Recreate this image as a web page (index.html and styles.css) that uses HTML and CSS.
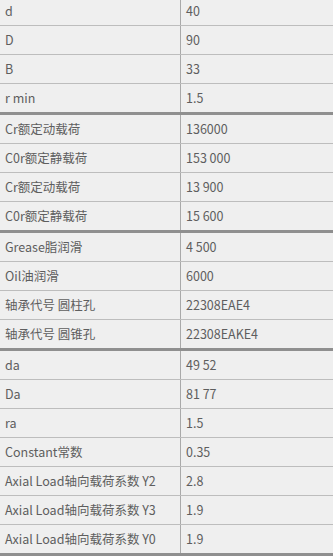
FILE: index.html
```html
<!DOCTYPE html>
<html lang="zh">
<head>
<meta charset="utf-8">
<link rel="stylesheet" href="styles.css">
</head>
<body class="page">
<table class="spec">
  <tbody class="group">
    <tr><td class="k">d</td><td class="v">40</td></tr>
    <tr><td class="k">D</td><td class="v">90</td></tr>
    <tr><td class="k">B</td><td class="v">33</td></tr>
    <tr><td class="k">r min</td><td class="v">1.5</td></tr>
  </tbody>
  <tbody class="group">
    <tr><td class="k">Cr额定动载荷</td><td class="v">136000</td></tr>
    <tr><td class="k">C0r额定静载荷</td><td class="v">153 000</td></tr>
    <tr><td class="k">Cr额定动载荷</td><td class="v">13 900</td></tr>
    <tr><td class="k">C0r额定静载荷</td><td class="v">15 600</td></tr>
  </tbody>
  <tbody class="group">
    <tr><td class="k">Grease脂润滑</td><td class="v">4 500</td></tr>
    <tr><td class="k">Oil油润滑</td><td class="v">6000</td></tr>
    <tr><td class="k">轴承代号 圆柱孔</td><td class="v">22308EAE4</td></tr>
    <tr><td class="k">轴承代号 圆锥孔</td><td class="v">22308EAKE4</td></tr>
  </tbody>
  <tbody class="group">
    <tr><td class="k">da</td><td class="v">49 52</td></tr>
    <tr><td class="k">Da</td><td class="v">81 77</td></tr>
    <tr><td class="k">ra</td><td class="v">1.5</td></tr>
    <tr><td class="k">Constant常数</td><td class="v">0.35</td></tr>
    <tr><td class="k">Axial Load轴向载荷系数 Y2</td><td class="v">2.8</td></tr>
    <tr><td class="k">Axial Load轴向载荷系数 Y3</td><td class="v">1.9</td></tr>
    <tr><td class="k">Axial Load轴向载荷系数 Y0</td><td class="v">1.9</td></tr>
  </tbody>
</table>
</body>
</html>
```
FILE: styles.css
```css
html, body {
  margin: 0;
  padding: 0;
  background: #efefef;
}
.page {
  overflow: hidden;
  height: 556px;
}
.spec {
  width: 333px;
  margin-top: -3px;
  border-collapse: collapse;
  table-layout: fixed;
  font-family: "Noto Sans CJK SC", "Noto Sans", sans-serif;
  font-size: 12.5px;
  color: #5e5e5e;
  background: #efefef;
}
.spec td {
  height: 28px;
  padding: 0 0 0 5px;
  box-sizing: content-box;
  border-bottom: 1px solid #bdbdbd;
  vertical-align: middle;
  white-space: nowrap;
  line-height: 18px;
}
.spec .k {
  width: 175px;
  border-right: 1px solid #a9a9a9;
}
.spec .v {
  padding-left: 5px;
}
.group tr:last-child td {
  border-bottom: 3px solid #8f8f8f;
}
```
